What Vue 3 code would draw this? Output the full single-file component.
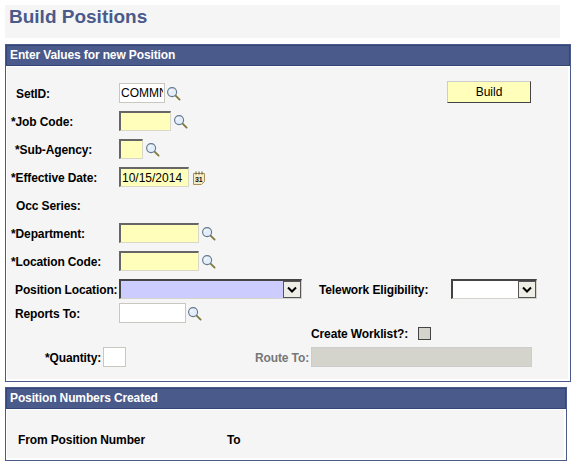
<template>
  <div class="page">
    <h1 class="title">Build Positions</h1>

    <section class="panel">
      <h2 class="panel-head">Enter Values for new Position</h2>
      <div class="panel-body form">
        <div class="row row-setid">
          <label class="lbl plain">SetID:</label>
          <input class="field" style="width: 46px" value="COMMN" />
          <svg class="lookup near" viewBox="0 0 16 16"><use href="#mag" /></svg>
          <button class="build">Build</button>
        </div>
        <div class="row">
          <label class="lbl">*Job Code:</label>
          <input class="field req" style="width: 52px" />
          <svg class="lookup" viewBox="0 0 16 16"><use href="#mag" /></svg>
        </div>
        <div class="row">
          <label class="lbl sub">*Sub-Agency:</label>
          <input class="field req" style="width: 24px" />
          <svg class="lookup" viewBox="0 0 16 16"><use href="#mag" /></svg>
        </div>
        <div class="row">
          <label class="lbl">*Effective Date:</label>
          <input class="field req" style="width: 70px" value="10/15/2014" />
          <svg class="cal" viewBox="0 0 12 14">
            <path d="M.5 2.5h11v8l-3 3h-8z" fill="#f6ecc8" stroke="#a8905a" />
            <path d="M3 .5v3M6 .5v3M9 .5v3" stroke="#5f5230" />
            <text x="2" y="11" class="cal-num">31</text>
          </svg>
        </div>
        <div class="row">
          <label class="lbl plain">Occ Series:</label>
        </div>
        <div class="row">
          <label class="lbl">*Department:</label>
          <input class="field req" style="width: 80px" />
          <svg class="lookup" viewBox="0 0 16 16"><use href="#mag" /></svg>
        </div>
        <div class="row">
          <label class="lbl">*Location Code:</label>
          <input class="field req" style="width: 80px" />
          <svg class="lookup" viewBox="0 0 16 16"><use href="#mag" /></svg>
        </div>
        <div class="row row-select">
          <label class="lbl plain tight">Position Location:</label>
          <div class="select lav" style="width: 183px">
            <select></select>
            <span class="arrow"><svg viewBox="0 0 10 6"><path d="M1 1l4 4 4-4" /></svg></span>
          </div>
          <label class="lbl-tele">Telework Eligibility:</label>
          <div class="select" style="width: 86px">
            <select></select>
            <span class="arrow"><svg viewBox="0 0 10 6"><path d="M1 1l4 4 4-4" /></svg></span>
          </div>
        </div>
        <div class="row row-reports">
          <label class="lbl plain tight">Reports To:</label>
          <input class="field" style="width: 67px" />
          <svg class="lookup near" viewBox="0 0 16 16"><use href="#mag" /></svg>
        </div>
        <div class="row row-worklist">
          <label class="lbl-worklist">Create Worklist?:</label>
          <input type="checkbox" class="check" />
        </div>
        <div class="row row-route">
          <label class="lbl-qty">*Quantity:</label>
          <input class="field" style="width: 23px" />
          <label class="lbl-route">Route To:</label>
          <input class="field off" style="width: 221px" disabled />
        </div>
      </div>
    </section>

    <section class="panel second">
      <h2 class="panel-head">Position Numbers Created</h2>
      <div class="panel-body numbers">
        <span class="from">From Position Number</span>
        <span>To</span>
      </div>
    </section>

    <svg width="0" height="0" class="defs">
      <defs>
        <g id="mag">
          <path d="M10 10l4.5 4.5" stroke="#7d7a3c" stroke-width="2" stroke-linecap="round" />
          <circle cx="6.5" cy="6.5" r="4.8" fill="#e2eefa" stroke="#66788c" stroke-width="1.2" />
          <path d="M4 6.5a2.6 2.6 0 0 1 2.5-2.6" fill="none" stroke="#fff" />
        </g>
      </defs>
    </svg>
  </div>
</template>

<script setup>
</script>

<style scoped>
.page {
  width: 575px;
  height: 472px;
  padding: 5px 4px 0 5px;
  box-sizing: border-box;
  overflow: hidden;
  background: #fff;
  font-family: "Liberation Sans", Arial, sans-serif;
  font-size: 12px;
  letter-spacing: -0.12px;
  color: #000;
}

.title {
  margin: 0 11px 6px 0;
  height: 33px;
  padding: 0 0 0 4px;
  box-sizing: border-box;
  background: #f5f5f5;
  color: #4a5a8a;
  font-size: 19px;
  line-height: 24px;
  letter-spacing: 0;
}

.panel {
  border: 1px solid #4a5a8a;
  background: #fff;
}

.second {
  margin-top: 5px;
  margin-right: 4px;
}

.panel-head {
  margin: 0;
  height: 21px;
  padding-left: 3px;
  box-sizing: border-box;
  background: #4a5a8a;
  border: 1px solid #34457a;
  color: #fff;
  font-size: 12px;
  line-height: 19px;
}

.panel-body {
  background: #f5f5f5;
  margin: 1px 2px 2px 1px;
}

.form {
  padding-top: 14px;
  height: 312px;
  box-sizing: border-box;
  font-weight: bold;
}

.row {
  display: flex;
  align-items: center;
  height: 28px;
  white-space: nowrap;
}

.row label {
  padding-top: 2px;
}

.row-setid {
  height: 24px;
  margin-bottom: 2px;
}

.lbl {
  width: 112px;
  padding-left: 4px;
  box-sizing: border-box;
  flex: none;
}

.sub {
  padding-left: 8px;
}

.plain {
  padding-left: 9px;
}

.tight {
  padding-left: 8px;
}

.field {
  height: 20px;
  padding: 0 1px;
  box-sizing: border-box;
  border: 1px solid #c8c8c0;
  background: #fff;
  font: 12px "Liberation Sans", Arial, sans-serif;
  color: #000;
  border-radius: 0;
  outline: none;
  flex: none;
}

.req {
  background: #ffffbb;
  border-width: 2px 1px 1px 2px;
  border-color: #666 #d8d8c8 #d8d8c8 #666;
  padding: 0 0 0 1px;
}

.off {
  background: #d4d4cc;
  border-color: #ccc;
}

.lookup {
  width: 15px;
  height: 15px;
  margin-left: 2px;
  flex: none;
}

.lookup.near {
  margin-left: 1px;
}

.cal {
  width: 12px;
  height: 14px;
  margin-left: 4px;
  margin-top: 2px;
  flex: none;
}

.cal-num {
  font-size: 7px;
  font-weight: bold;
  fill: #111;
}

.build {
  margin-left: auto;
  margin-right: 37px;
  margin-top: -2px;
  width: 84px;
  height: 22px;
  padding: 0;
  box-sizing: border-box;
  background: #ffffbb;
  border: 1px solid;
  border-color: #ccc #444 #444 #ccc;
  font: 12px "Liberation Sans", Arial, sans-serif;
  color: #000;
  border-radius: 0;
}

.row-select {
  height: 26px;
  margin-top: 1px;
}

.row-reports {
  height: 22px;
}

.select {
  display: flex;
  height: 20px;
  box-sizing: border-box;
  border-top: 2px solid #444;
  border-left: 2px solid #444;
  border-bottom: 1px solid #d4d4cc;
  border-right: 1px solid #d4d4cc;
  background: #fff;
  flex: none;
}

.select select {
  flex: 1;
  min-width: 0;
  appearance: none;
  border: 0;
  padding: 0;
  background: transparent;
  border-radius: 0;
}

.lav {
  background: #ccccff;
}

.arrow {
  width: 18px;
  flex: none;
  display: flex;
  align-items: center;
  justify-content: center;
  box-sizing: border-box;
  background: #eeeee6;
  border: 1px solid #555;
}

.arrow svg {
  width: 10px;
  height: 7px;
}

.arrow path {
  fill: none;
  stroke: #000;
  stroke-width: 2;
}

.lbl-tele {
  margin-left: 17px;
  width: 132px;
  flex: none;
}

.row-worklist {
  height: 18px;
  padding-left: 304px;
}

.lbl-worklist {
  width: 107px;
  flex: none;
}

.check {
  appearance: none;
  width: 13px;
  height: 13px;
  margin: 0;
  box-sizing: border-box;
  background: #d4d4cc;
  border: 1px solid #444;
  border-radius: 0;
}

.row-route {
  height: 24px;
  margin-top: 3px;
}

.lbl-qty {
  width: 96px;
  padding-left: 38px;
  box-sizing: border-box;
  flex: none;
}

.lbl-route {
  width: 56px;
  margin-left: 129px;
  flex: none;
  color: #777;
}

.numbers {
  display: flex;
  height: 48px;
  box-sizing: border-box;
  padding: 23px 0 0 11px;
  font-weight: bold;
}

.from {
  width: 209px;
}

.defs {
  position: absolute;
}
</style>
